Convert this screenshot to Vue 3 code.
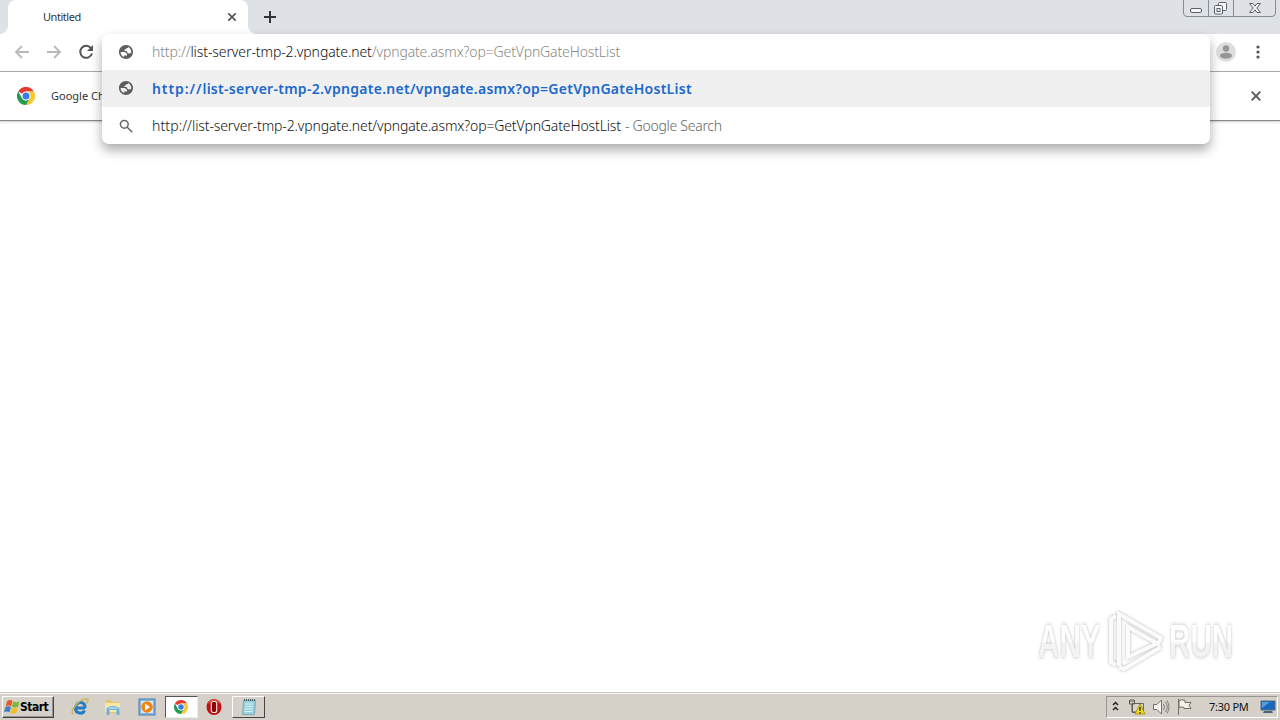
<script setup>
const globe = 'M12 2C6.480 2 2 6.480 2 12s4.480 10 10 10 10-4.480 10-10S17.520 2 12 2zM4.300 12h4.400c3.400 0 5 1.700 4.900 5H9.400v2.300A8 8 0 0 1 4.300 12zM19.600 12.600c-.7 1-1.700 1.500-3 1.500-2.200 0-3.400-1.100-3.400-3.400h-3.500c0-1.900 1-2.900 2.900-2.900V6.200h2.300V4.800c2.700 1.100 4.600 3.900 4.700 7.800z'
</script>

<template>
  <div class="desktop">
    <header class="tabstrip">
      <div class="tab">
        <span class="tab-title">Untitled</span>
        <svg class="tab-close" viewBox="0 0 10 10"><path d="M1.3 1.3 8.7 8.7M8.7 1.3 1.3 8.7" /></svg>
      </div>
      <svg class="new-tab" viewBox="0 0 12 12"><path d="M6 0v12M0 6h12" /></svg>
      <div class="window-buttons">
        <svg viewBox="0 0 94 17">
          <path class="frame" d="M.5 0v13q0 3.500 3.500 3.500h85q3.500 0 3.500-3.500V0M25.500 0v16M50.500 0v16" />
          <rect class="glyph" x="7.500" y="8.500" width="11" height="4" rx="1.500" />
          <rect class="glyph" x="35.500" y="2.500" width="8" height="8" rx="1" />
          <rect class="glyph" x="31.500" y="5.500" width="8" height="8.500" rx="1" />
          <rect class="glyph" x="34" y="8.500" width="3" height="3" />
          <path class="glyph" d="M66.500 3.500h3.500l2 2.600 2-2.600h3.500l-3.700 4.500 3.700 4.500h-3.500l-2-2.600-2 2.600h-3.500l3.700-4.500z" />
        </svg>
      </div>
    </header>

    <div class="toolbar">
      <svg class="nav back" viewBox="0 0 16 16"><path d="M15 8H2M8 2 2 8l6 6" /></svg>
      <svg class="nav forward" viewBox="0 0 16 16"><path d="M1 8h13M8 2l6 6-6 6" /></svg>
      <svg class="reload" viewBox="0 0 16 16"><path class="ring" d="M13.200 4.400A6 6 0 1 0 14 9.500" /><path class="head" d="M15 1v6H9z" /></svg>
      <svg class="avatar" viewBox="0 0 20 20"><circle cx="10" cy="10" r="10" fill="#dedede" /><circle cx="10" cy="6.500" r="3.200" fill="#969696" /><ellipse cx="10" cy="13.700" rx="6" ry="3" fill="#969696" /></svg>
      <svg class="menu" viewBox="0 0 4 14"><circle cx="2" cy="2" r="1.600" /><circle cx="2" cy="7" r="1.600" /><circle cx="2" cy="12" r="1.600" /></svg>
    </div>

    <div class="infobar">
      <svg class="chrome-logo" viewBox="0 0 18 18">
        <path fill="#e33b2e" d="M9 9 1.200 4.500A9 9 0 0 1 16.800 4.500H9z" />
        <path fill="#f9c82e" d="M9 4.500h7.800A9 9 0 0 1 9 18l3.900-6.750z" />
        <path fill="#229a50" d="M1.200 4.500A9 9 0 0 0 9 18l3.900-6.750L9 13.500 5.100 11.250z" />
        <circle cx="9" cy="9" r="4.500" fill="#fff" /><circle cx="9" cy="9" r="3.500" fill="#397be8" />
      </svg>
      <span class="info-text">Google Ch</span>
      <svg class="info-close" viewBox="0 0 10 10"><path d="M.7.7 9.300 9.300M9.300.7.7 9.300" /></svg>
    </div>

    <main class="page"></main>

    <div class="omnibox">
      <div class="row">
        <svg class="row-icon" viewBox="2 2 20 20"><path :d="globe" /></svg>
        <span class="url muted">http://<b>list-server-tmp-2.vpngate.net</b>/vpngate.asmx?op=GetVpnGateHostList</span>
      </div>
      <div class="row selected">
        <svg class="row-icon" viewBox="2 2 20 20"><path :d="globe" /></svg>
        <span class="url link"><span class="scheme">http://</span>list-server-tmp-2.vpngate.net/vpngate.asmx?op=GetVpnGateHostList</span>
      </div>
      <div class="row">
        <svg class="row-icon search" viewBox="0 0 14 14"><circle cx="5.300" cy="5.300" r="3.900" /><path d="m8.200 8.200 5 5" /></svg>
        <span class="url"><span class="thin-scheme">http://</span>list-server-tmp-2.vpngate.net/vpngate.asmx?op=GetVpnGateHostList</span><span class="suffix">- Google Search</span>
      </div>
    </div>

    <div class="watermark">
      <span class="word">ANY</span>
      <svg viewBox="0 0 60 64"><path d="M9 7 4 10v43l5 3M12 46V5l42 24-3 6-30-17v22M12 58l5 2 37-22M12 57V46M21 40v8l28-13" /></svg>
      <span class="word">RUN</span>
    </div>

    <footer class="taskbar">
      <div class="start">
        <svg viewBox="0 0 16 16">
          <path fill="#e65a25" d="M3.200 2q2.700-2 5.300 0L7.200 7.200q-2.500-1.500-5.500 0z" /><path fill="#78b83b" d="M9.200 2.500q3 1.500 6.300 0L14 7.700q-3 1.500-6 0z" />
          <path fill="#3d80c6" d="M1.400 8q3-1.500 5.500 0l-1.400 5.300q-2.500-1.500-5.400 0z" /><path fill="#f5bd28" d="M7.700 8.500q3 1.500 6 0L12.300 14q-3 1.500-6 0z" />
        </svg>
        <span>Start</span>
      </div>
      <svg class="quick ie" viewBox="0 0 18 18"><path d="M14 10H5.500M14 10c.8-7-9-7.500-9.500 0-.2 6 7.500 6.500 9 2.500" fill="none" stroke="#237dc5" stroke-width="3" /><path d="M3 16C-3 16 7 1 15 1c4 0 1 4 0 5" fill="none" stroke="#c9b75c" stroke-width="1.500" /></svg>
      <svg class="quick explorer" viewBox="0 0 18 18"><path fill="#e5c66e" d="M2 2h5l1 2h8v11H2z" /><path fill="#f7e8a5" d="M1 5h15v9H1z" /><path fill="#72afd9" d="M2.500 10q6.500-4 13 0v7h-3v-5h-7v5h-3z" /><path fill="#a7d7ee" d="M4 10q5-2 10 0v1H4z" /></svg>
      <svg class="quick media" viewBox="0 0 18 18"><rect x="1" y="1" width="16" height="16" fill="#83b5df" stroke="#4b7fae" /><rect x="3" y="3" width="12" height="12" fill="#d9ebf6" /><circle cx="9" cy="9" r="5.800" fill="#ef8519" /><path d="m7 5.500 5 3.500-5 3.500z" fill="#fff" /></svg>
      <div class="task active">
        <svg viewBox="0 0 18 18">
          <path fill="#e33b2e" d="M9 9 1.200 4.500A9 9 0 0 1 16.800 4.500H9z" /><path fill="#f9c82e" d="M9 4.500h7.800A9 9 0 0 1 9 18l3.900-6.750z" />
          <path fill="#229a50" d="M1.200 4.500A9 9 0 0 0 9 18l3.900-6.750L9 13.500 5.100 11.250z" /><circle cx="9" cy="9" r="4.500" fill="#fff" /><circle cx="9" cy="9" r="3.500" fill="#397be8" />
        </svg>
      </div>
      <svg class="quick opera" viewBox="0 0 18 18"><ellipse cx="9" cy="9" rx="7.500" ry="8" fill="#b81316" /><path d="M3 5q6-6 12 0" fill="none" stroke="#dc5950" stroke-width="1.500" /><rect x="6.300" y="3.500" width="5.400" height="11" rx="2" fill="#8b0709" stroke="#f8dddd" stroke-width="1.200" /></svg>
      <div class="task note">
        <svg viewBox="0 0 18 18"><path fill="#9bd1dc" stroke="#78aab5" d="M3.500 2.500h12l-1 14h-12z" /><path d="M5 6h8M5 8.500h8M4.500 11h8M4.500 13.500h8" stroke="#d7f1f4" /><path d="M4 2h11" stroke="#455e65" stroke-width="2" stroke-dasharray="1 1" /></svg>
      </div>
      <div class="tray">
        <svg class="chevrons" viewBox="0 0 7 10"><path d="m1 4 2.500-2.500L6 4M1 9l2.500-2.500L6 9" /></svg>
        <svg class="network" viewBox="0 0 18 18"><path d="M4.500 5.500h11v9h-11z" fill="#d8d6cc" stroke="#69665d" /><path d="M1.500 2v4h5V2M3 1v3m2-3v3M4 6v8h5" fill="none" stroke="#57544e" /><path d="m12 6 5 10H7z" fill="#f6dc19" stroke="#aa9213" /><path d="M12 9v4m0 1v1.500" stroke="#222" stroke-width="1.300" /></svg>
        <svg class="speaker" viewBox="0 0 18 18"><path d="M1.500 6.500H5L9.500 2v14L5 11.500H1.500z" fill="#f5f4ef" stroke="#77736b" /><path d="M11.500 6q2 3 0 6M13.500 4q3.500 5 0 10M15 2.500q4 6.500 0 13" fill="none" stroke="#858178" /></svg>
        <svg class="flag" viewBox="0 0 18 18"><path d="M2.500 1v16M3 2.500q3-1.500 6 0v2h6l-2 3 2 3H8v-1q-3-1-5 0z" fill="#f2f0e9" stroke="#716e66" /></svg>
        <span class="clock">7:30 PM</span>
        <svg class="monitor" viewBox="0 0 16 16"><path d="M1 2h14v9H1z" fill="#1768bd" stroke="#4e6780" /><path d="m2 3 8 0-8 6z" fill="#549be0" /><path d="M4 12h8l1 2H3z" fill="#4b6273" /></svg>
      </div>
    </footer>
  </div>
</template>

<style>
body { margin: 0; overflow: hidden; }
</style>

<style scoped>
* { box-sizing: border-box; }
svg { display: block; flex: none; }
.desktop { position: relative; display: flex; flex-direction: column; width: 1280px; height: 720px; overflow: hidden; background: #fff; font-family: "Noto Sans", "Open Sans", sans-serif; }
.tabstrip { display: flex; height: 34px; flex: none; padding-left: 8px; background: #dee1e6; }
.tab { position: relative; display: flex; align-items: center; width: 240px; height: 34px; padding: 0 11px 0 35px; background: #fff; border-radius: 8px 8px 0 0; }
.tab::before, .tab::after { content: ""; position: absolute; bottom: 0; width: 8px; height: 8px; }
.tab::before { left: -8px; background: radial-gradient(circle at 0 0, transparent 7.5px, #fff 8px); }
.tab::after { right: -8px; background: radial-gradient(circle at 100% 0, transparent 7.5px, #fff 8px); }
.tab-title, .info-text { font-size: 11px; letter-spacing: -.1px; color: #333; white-space: nowrap; }
.tab-title { padding-bottom: 2px; letter-spacing: -.45px; }
.tab-close { width: 10px; height: 10px; margin-left: auto; stroke: #555; stroke-width: 1.7; }
.new-tab { width: 12px; height: 12px; margin: 11px 0 0 16px; stroke: #333; stroke-width: 2; }
.window-buttons { margin-left: auto; margin-right: 3px; }
.window-buttons svg { width: 94px; height: 17px; }
.frame { fill: none; stroke: #858b94; }
.glyph { fill: #f5f6f7; stroke: #5b606a; }
.toolbar { display: flex; align-items: center; height: 38px; flex: none; padding: 0 20px 1px 14px; border-bottom: 1px solid #aaa; background: #fff; }
.nav { width: 16px; height: 16px; margin-right: 16px; fill: none; stroke: #b9b9b9; stroke-width: 1.8; }
.reload { width: 16px; height: 16px; }
.ring { fill: none; stroke: #555; stroke-width: 2; }
.head { fill: #555; }
.avatar { width: 20px; height: 20px; margin-left: auto; }
.menu { width: 4px; height: 14px; margin-left: 20px; fill: #555; }
.infobar { display: flex; align-items: center; height: 49px; flex: none; padding: 0 19px 0 17px; background: #fff; border-bottom: 1px solid #888; box-shadow: 0 1px 2px #0003; }
.chrome-logo { width: 18px; height: 18px; }
.info-text { margin-left: 16px; padding-bottom: 2px; letter-spacing: 0; }
.info-close { width: 10px; height: 10px; margin-left: auto; stroke: #555; stroke-width: 1.8; }
.page { flex: 1; }
.omnibox { position: absolute; left: 102px; top: 34px; width: 1108px; height: 110px; border-radius: 7px; background: #fff; box-shadow: 0 6px 12px #0005; }
.row { display: flex; align-items: center; height: 37px; padding-left: 17px; white-space: nowrap; }
.row:first-child { height: 36px; padding-bottom: 1px; }
.selected { background: #f0f0f0; }
.row-icon { width: 14px; height: 14px; margin-right: 19px; fill: #5f5f5f; }
.selected .row-icon { margin-bottom: 2px; }
.search { fill: none; stroke: #666; stroke-width: 1.5; }
.url { font-size: 14px; letter-spacing: -.13px; color: #111; font-weight: 300; }
.muted { color: #888; letter-spacing: -.14px; }
.muted b { font-weight: 300; color: #111; letter-spacing: -.09px; }
.thin-scheme { letter-spacing: .1px; }
.link { color: #1d69cb; font-weight: 600; letter-spacing: .27px; }
.scheme { letter-spacing: .9px; }
.suffix { margin-left: 4px; color: #666; font-size: 14px; font-weight: 300; letter-spacing: -.27px; }
.watermark { position: absolute; left: 1038px; top: 609px; display: flex; align-items: center; height: 64px; }
.word { width: 104px; margin-right: -40px; font: bold 47px/64px "Liberation Sans", sans-serif; color: transparent; background: linear-gradient(#fff 50%, #f3f3f3 54%); background-clip: text; transform: scaleX(.63); transform-origin: left; filter: drop-shadow(0 0 2px #b8b8b8); }
.watermark svg { width: 60px; height: 64px; margin: 0 2px 0 5px; overflow: visible; fill: none; stroke: #fbfbfb; stroke-width: 4; filter: drop-shadow(0 0 1.5px #b5b5b5); }
.taskbar { display: flex; align-items: center; height: 28px; flex: none; padding: 1px 2px 0; background: #d5d1c8; border-top: 1px solid #c5c5be; box-shadow: inset 0 1px #f9f9f5; }
.start { display: flex; align-items: center; width: 52px; height: 22px; padding-left: 1px; border: 1px solid; border-color: #fff #444 #444 #fff; box-shadow: inset -1px -1px #96928b; }
.start svg { width: 16px; height: 16px; }
.start span { font: bold 12px "DejaVu Sans Condensed", "DejaVu Sans", sans-serif; letter-spacing: -.5px; }
.quick { width: 18px; height: 18px; }
.ie { margin-left: 17px; }
.explorer { margin-left: 15px; }
.media { margin-left: 16px; }
.task { display: flex; align-items: center; justify-content: center; width: 33px; height: 22px; border: 1px solid; border-color: #fff #444 #444 #fff; }
.task svg { width: 14px; height: 14px; }
.active { margin-left: 9px; padding-right: 1px; background: #fff; border-color: #555 #eee #eee #555; }
.opera { margin-left: 7px; }
.note { margin-left: 9px; }
.note svg { width: 18px; height: 18px; }
.tray { display: flex; align-items: center; width: 172px; height: 22px; margin-left: auto; border: 1px solid; border-color: #9a968e #fff #fff #9a968e; }
.chevrons { width: 7px; height: 10px; margin: 0 0 3px 5px; fill: none; stroke: #222; stroke-width: 1.5; }
.network { width: 18px; height: 18px; margin-left: 9px; }
.speaker { width: 18px; height: 18px; margin-left: 6px; }
.flag { width: 18px; height: 18px; margin-left: 6px; }
.clock { width: 45px; margin-left: 15px; padding-bottom: 2px; font-size: 11px; letter-spacing: -.25px; white-space: nowrap; color: #111; }
.monitor { width: 16px; height: 16px; margin-left: 6px; }
</style>
